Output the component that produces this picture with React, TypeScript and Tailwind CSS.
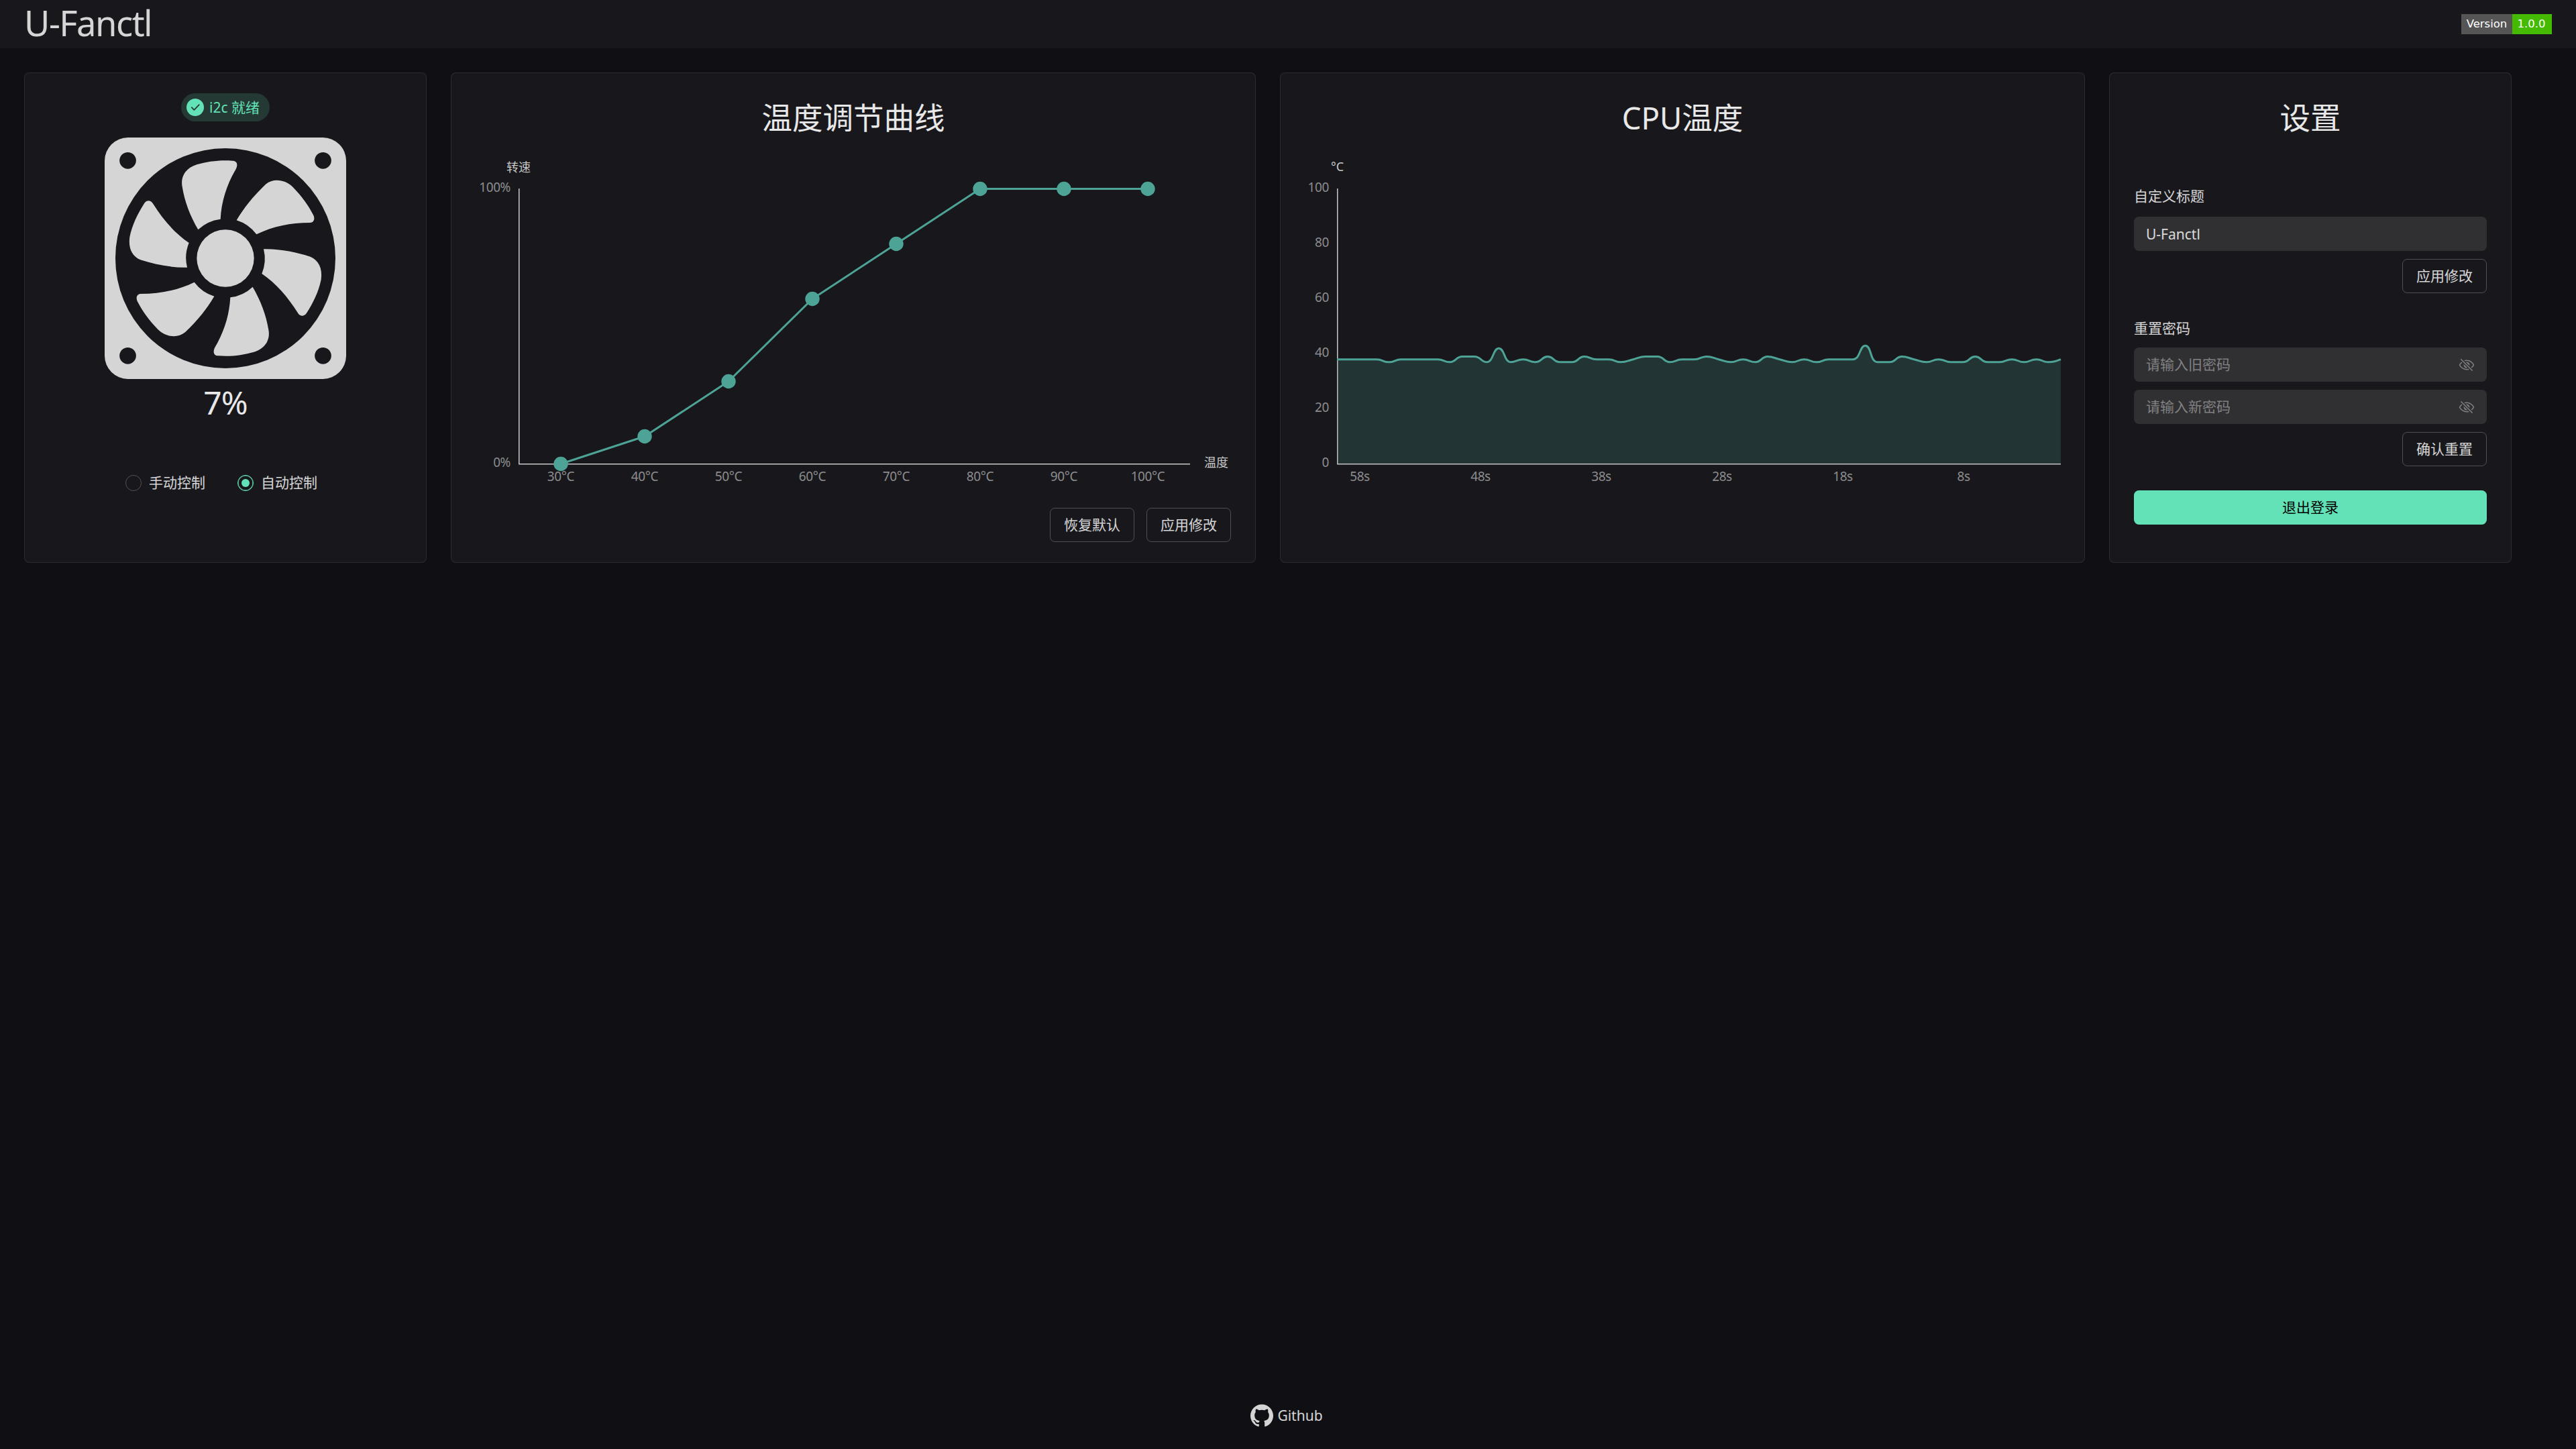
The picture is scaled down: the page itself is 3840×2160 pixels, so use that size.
import React, { useState } from "react";
import { IoEyeOffOutline } from "react-icons/io5";
import { SiGithub } from "react-icons/si";

const curve = [
  { temp: 30, speed: 0 },
  { temp: 40, speed: 10 },
  { temp: 50, speed: 30 },
  { temp: 60, speed: 60 },
  { temp: 70, speed: 80 },
  { temp: 80, speed: 100 },
  { temp: 90, speed: 100 },
  { temp: 100, speed: 100 },
];

const cpuTemps = [
  38, 38, 38, 38, 37, 38, 38, 38, 38, 37, 39, 39, 37, 42, 37, 38, 37, 39, 37, 37,
  39, 38, 38, 37, 38, 39, 39, 37, 38, 38, 39, 38, 37, 38, 37, 39, 38, 37, 38, 37,
  38, 38, 38, 43, 37, 37, 39, 38, 37, 38, 37, 37, 39, 37, 37, 38, 37, 38, 37, 38,
];

type Point = { x: number; y: number };

const clamp = (v: number, a: number, b: number) =>
  Math.max(Math.min(a, b), Math.min(Math.max(a, b), v));

// Smooth line, control points never go past the neighbouring values
const smoothPath = (pts: Point[]) => {
  let d = `M${pts[0].x} ${pts[0].y}`;
  let out: Point = pts[0];
  for (let i = 1; i < pts.length; i++) {
    const prev = pts[i - 1];
    const cur = pts[i];
    const next = pts[i + 1];
    let cpIn: Point = cur;
    let cpOut: Point = cur;
    if (next) {
      const lp = Math.hypot(cur.x - prev.x, cur.y - prev.y);
      const ln = Math.hypot(next.x - cur.x, next.y - cur.y);
      const r = ln / (ln + lp);
      const nx = clamp(cur.x + (next.x - prev.x) * 0.5 * r, cur.x, next.x);
      const ny = clamp(cur.y + (next.y - prev.y) * 0.5 * r, cur.y, next.y);
      cpIn = {
        x: clamp(cur.x - ((nx - cur.x) * lp) / ln, prev.x, cur.x),
        y: clamp(cur.y - ((ny - cur.y) * lp) / ln, prev.y, cur.y),
      };
      cpOut = {
        x: cur.x + ((cur.x - cpIn.x) * ln) / lp,
        y: cur.y + ((cur.y - cpIn.y) * ln) / lp,
      };
    }
    d += `C${out.x} ${out.y} ${cpIn.x} ${cpIn.y} ${cur.x} ${cur.y}`;
    out = cpOut;
  }
  return d;
};

const Card: React.FC<{ className: string; children: React.ReactNode }> = ({
  className,
  children,
}) => (
  <section
    className={`flex h-[731px] flex-col rounded-[7.5px] border border-white/9 bg-[#18181c] px-9 py-[30px] ${className}`}
  >
    {children}
  </section>
);

const CardTitle: React.FC<{ children: React.ReactNode }> = ({ children }) => (
  <h2 className="flex h-[74px] shrink-0 items-center justify-center text-[45.5px] leading-none text-white/90">
    {children}
  </h2>
);

const Button: React.FC<{ children: React.ReactNode }> = ({ children }) => (
  <button className="h-[51px] w-[126px] shrink-0 rounded-[7.5px] border border-white/24 text-[21px] leading-none">
    {children}
  </button>
);

const Blades = () => (
  <>
    <path d="M566 410C570 330 595 254 634 188C646 166 640 149 620 149C560 145 510 152 460 166C415 180 386 215 395 265C405 330 430 395 466 457A177 177 0 0 1 566 410Z" />
    <path d="M638 415C670 360 710 310 768 254C802 226 855 232 890 267C930 308 960 350 982 393C990 412 982 426 965 426C880 426 800 442 727 478A177 177 0 0 0 638 415Z" />
    <path d="M759 544C830 542 905 558 968 578C1005 594 1023 630 1016 680C1005 735 980 785 950 832C940 846 922 846 913 831C865 755 815 698 751 654A177 177 0 0 0 759 544Z" />
  </>
);

const FanIcon = () => (
  <svg viewBox="48 45 1080 1080" className="mt-6 size-[360px] shrink-0 self-center">
    <rect x="48" y="45" width="1080" height="1080" rx="104" fill="#d5d5d5" />
    <g fill="#18181c">
      <circle cx="588" cy="585" r="492" />
      <circle cx="151.500" cy="148" r="37" />
      <circle cx="1024.500" cy="148" r="37" />
      <circle cx="151.500" cy="1021" r="37" />
      <circle cx="1024.500" cy="1021" r="37" />
    </g>
    <g fill="#d5d5d5">
      <circle cx="588" cy="585" r="128" />
      <Blades />
      <g transform="rotate(180 588 585)">
        <Blades />
      </g>
    </g>
  </svg>
);

const FanCurveChart = () => {
  const pts = curve.map((c, i) => ({
    x: 127 + i * 125,
    y: 478.5 - c.speed * 4.1,
  }));
  return (
    <svg viewBox="0 0 1126 544" className="h-[544px] w-[1126px] shrink-0 overflow-visible">
      <g stroke="#c9c9ca" strokeWidth="1.5">
        <line x1="64.750" y1="68" x2="64.750" y2="479" />
        <line x1="64" y1="478.750" x2="1065" y2="478.750" />
      </g>
      <g fill="#c9c9ca" fontSize="18">
        <text x="64" y="43" textAnchor="middle">转速</text>
        <text x="1086" y="483">温度</text>
      </g>
      <g fill="#8c8c8e" fontSize="19" letterSpacing="-0.4">
        <text x="52" y="73" textAnchor="end">100%</text>
        <text x="52" y="483" textAnchor="end">0%</text>
        {curve.map((c, i) => (
          <text key={c.temp} x={pts[i].x} y="504" textAnchor="middle">
            {c.temp}°C
          </text>
        ))}
      </g>
      <polyline
        points={pts.map((p) => `${p.x},${p.y}`).join(" ")}
        fill="none"
        stroke="#4ea397"
        strokeWidth="3"
        strokeLinejoin="bevel"
      />
      {pts.map((p) => (
        <circle key={p.x} cx={p.x} cy={p.y} r="10.700" fill="#4ea397" />
      ))}
    </svg>
  );
};

const CpuChart = () => {
  const pts = cpuTemps.map((t, i) => ({
    x: i === 0 ? 48 : 52.5 + i * 18.21,
    y: 478.5 - t * 4.1,
  }));
  const line = smoothPath(pts);
  return (
    <svg viewBox="0 0 1126 544" className="h-[544px] w-[1126px] shrink-0 overflow-visible">
      <g stroke="#c9c9ca" strokeWidth="1.5">
        <line x1="48.750" y1="68" x2="48.750" y2="479" />
        <line x1="48" y1="478.750" x2="1127" y2="478.750" />
      </g>
      <g fill="#8c8c8e" fontSize="19" letterSpacing="-0.4">
        {[100, 80, 60, 40, 20, 0].map((v) => (
          <text key={v} x="36" y={483 - v * 4.1} textAnchor="end">
            {v}
          </text>
        ))}
        {[58, 48, 38, 28, 18, 8].map((s, i) => (
          <text key={s} x={82 + i * 180} y="504" textAnchor="middle">
            {s}s
          </text>
        ))}
      </g>
      <text x="48.500" y="42" textAnchor="middle" fontSize="18" fill="#c9c9ca">
        °C
      </text>
      <path d={`${line}V478.500H48Z`} fill="#4ea397" fillOpacity="0.2" />
      <path d={line} fill="none" stroke="#4ea397" strokeWidth="3" />
    </svg>
  );
};

const Radio: React.FC<{
  label: string;
  checked: boolean;
  onSelect: () => void;
}> = ({ label, checked, onSelect }) => (
  <button onClick={onSelect} className="flex h-6 items-center gap-[11px] text-[21px] leading-none">
    <span
      className={`flex size-6 items-center justify-center rounded-full border ${
        checked ? "border-[#63e2b7] shadow-[inset_0_0_0_0.5px_#63e2b7]" : "border-white/24"
      }`}
    >
      {checked && <span className="size-3 rounded-full bg-[#63e2b7]" />}
    </span>
    <span className="pb-0.5">{label}</span>
  </button>
);

const PasswordInput: React.FC<{ placeholder: string }> = ({ placeholder }) => (
  <div className="mt-3 flex h-[51px] shrink-0 items-center rounded-[7.5px] bg-[#303032] px-[18px]">
    <input
      type="password"
      placeholder={placeholder}
      className="min-w-0 flex-1 bg-transparent text-[21px] outline-none placeholder:text-[#818183]"
    />
    <IoEyeOffOutline className="size-6 text-[#818183]" />
  </div>
);

const App: React.FC = () => {
  const [mode, setMode] = useState("auto");
  const [title, setTitle] = useState("U-Fanctl");

  return (
    <div className="flex h-[2160px] w-[3840px] flex-col bg-[#101014] font-['Noto_Sans','Noto_Sans_CJK_SC',sans-serif] text-white/82">
      <header className="flex h-[72px] shrink-0 items-center justify-between bg-[#18181c] px-9">
        <h1 className="pb-1 text-[52.5px] leading-none tracking-[-1.5px]">U-Fanctl</h1>
        <div className="flex h-[30px] font-['DejaVu_Sans',sans-serif] text-[16.5px] leading-[30px] text-white">
          <span className="w-[76px] bg-[#555] text-center">Version</span>
          <span className="w-[59px] bg-[#4b0] pr-0.5 text-center">1.0.0</span>
        </div>
      </header>

      <main className="flex flex-1 items-start gap-9 px-9 pt-9">
        <Card className="w-[600px]">
          <div className="flex h-[42px] w-[132px] shrink-0 items-center gap-2 self-center rounded-full bg-[#63e2b7]/16 pl-2 text-[21px] leading-none whitespace-nowrap text-[#63e2b7]">
            <svg viewBox="0 0 26 26" className="size-[26px] shrink-0">
              <circle cx="13" cy="13" r="13" fill="#63e2b7" />
              <path
                d="M7.800 13.200L11.400 16.800L18.800 9.200"
                fill="none"
                stroke="#243834"
                strokeWidth="1.800"
                strokeLinecap="round"
                strokeLinejoin="round"
              />
            </svg>
            i2c 就绪
          </div>
          <FanIcon />
          <div className="flex h-[72px] shrink-0 items-center justify-center pb-0.5 text-[48px] leading-none tracking-[-1px] text-white/90">
            7%
          </div>
          <div className="mt-[71px] flex justify-center gap-12 pr-3">
            <Radio label="手动控制" checked={mode === "manual"} onSelect={() => setMode("manual")} />
            <Radio label="自动控制" checked={mode === "auto"} onSelect={() => setMode("auto")} />
          </div>
        </Card>

        <Card className="w-[1200px]">
          <CardTitle>温度调节曲线</CardTitle>
          <FanCurveChart />
          <div className="flex justify-end gap-[18px]">
            <Button>恢复默认</Button>
            <Button>应用修改</Button>
          </div>
        </Card>

        <Card className="w-[1200px]">
          <CardTitle>CPU温度</CardTitle>
          <CpuChart />
        </Card>

        <Card className="w-[600px]">
          <CardTitle>设置</CardTitle>
          <div className="mt-[62px] h-[34px] text-[21px] leading-[34px]">自定义标题</div>
          <input
            value={title}
            onChange={(e) => setTitle(e.target.value)}
            className="mt-3.5 h-[51px] rounded-[7.5px] bg-[#303032] px-[18px] text-[21px] outline-none"
          />
          <div className="mt-3 flex justify-end">
            <Button>应用修改</Button>
          </div>
          <div className="mt-[35px] h-[34px] text-[21px] leading-[34px]">重置密码</div>
          <PasswordInput placeholder="请输入旧密码" />
          <PasswordInput placeholder="请输入新密码" />
          <div className="mt-3 flex justify-end">
            <Button>确认重置</Button>
          </div>
          <button className="mt-9 h-[51px] rounded-[7.5px] bg-[#63e2b7] text-[21px] leading-none text-black">
            退出登录
          </button>
        </Card>
      </main>

      <footer className="flex h-[100px] shrink-0 items-center justify-center gap-1.5 pr-1 text-[21px] leading-none">
        <SiGithub className="size-[34px]" />
        Github
      </footer>
    </div>
  );
};

export default App;
